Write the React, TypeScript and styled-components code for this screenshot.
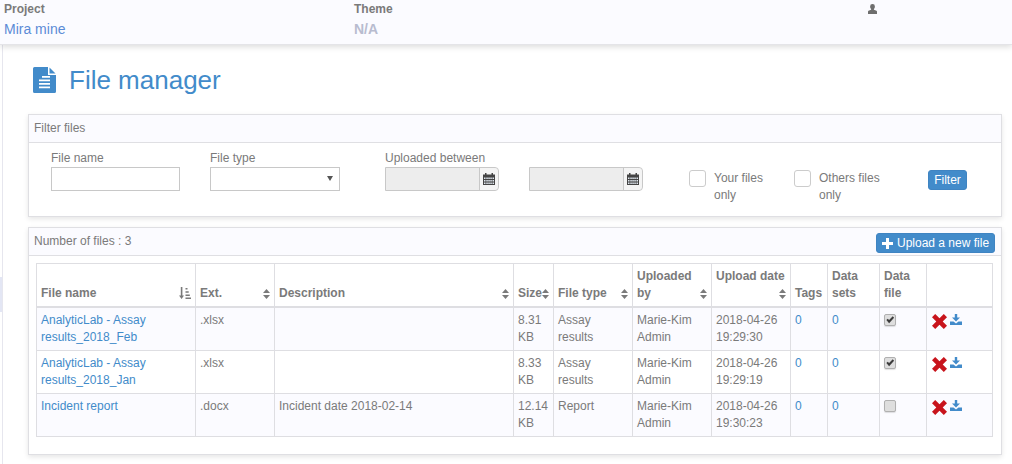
import React from "react";
import styled, { createGlobalStyle } from "styled-components";

const Global = createGlobalStyle`
  html, body { margin: 0; padding: 0; background: #fff; }
  body { font-family: "Liberation Sans", Arial, sans-serif; font-size: 12px; line-height: 17px; color: #7a7a7a; }
  * { box-sizing: border-box; }
`;

const Page = styled.div`
  width: 1012px;
  height: 464px;
  overflow: hidden;
  display: flex;
  flex-direction: column;
`;

const TopBar = styled.header`
  height: 45px;
  flex: none;
  background: #fbfbff;
  border-bottom: 1px solid #e4e4e8;
  box-shadow: 0 2px 6px rgba(0, 0, 0, 0.14);
  display: grid;
  grid-template-columns: 350px 514px 1fr;
  padding: 2px 0 0 4px;
  position: relative;
  z-index: 2;
`;

const TopLabel = styled.div`
  font-weight: bold;
  font-size: 12px;
  line-height: 15px;
  color: #7a7a7a;
`;

const TopValue = styled.div<{ $muted?: boolean }>`
  font-size: 14px;
  line-height: 20px;
  margin-top: 2px;
  color: ${(p) => (p.$muted ? "#b8bccf" : "#5b8bd6")};
  font-weight: ${(p) => (p.$muted ? "bold" : "normal")};
`;

const UserSlot = styled.div`
  padding-top: 2px;
`;

const Content = styled.div`
  flex: 1;
  display: flex;
  min-height: 0;
`;

const Rail = styled.aside`
  width: 2px;
  flex: none;
  padding-top: 232px;
`;

const RailMark = styled.div`
  height: 35px;
  background: #e3e6f4;
`;

const Body = styled.main`
  flex: 1;
  border-left: 1px solid #e6e6ee;
  padding: 0 10px 0 25px;
`;

const Title = styled.h1`
  margin: 20px 0 0 5px;
  height: 30px;
  display: flex;
  align-items: center;
  gap: 13px;
  font-size: 26px;
  font-weight: normal;
  line-height: 30px;
  color: #428bca;
`;

const Panel = styled.section`
  border: 1px solid #dfdfe3;
  background: #fff;
  box-shadow: 0 2px 5px rgba(0, 0, 0, 0.1);
`;

const FilterPanel = styled(Panel)`
  margin-top: 19px;
  height: 103px;
`;

const FilesPanel = styled(Panel)`
  margin-top: 10px;
  height: 228px;
`;

const PanelHead = styled.div`
  height: 28px;
  background: #fbfbff;
  border-bottom: 1px solid #dfdfe3;
  padding: 5px 6px 0 5px;
  display: flex;
  justify-content: space-between;
  align-items: flex-start;
`;

const FilterRow = styled.div`
  display: flex;
  align-items: flex-start;
  padding: 7px 0 0 22px;
`;

const Field = styled.label<{ $w: number }>`
  display: block;
  width: ${(p) => p.$w}px;
  flex: none;
`;

const FieldLabel = styled.div`
  height: 17px;
  line-height: 17px;
`;

const TextBox = styled.div<{ $w: number }>`
  width: ${(p) => p.$w}px;
  height: 24px;
  border: 1px solid #c8c8c8;
  background: #fff;
  position: relative;
`;

const Caret = styled.span`
  position: absolute;
  right: 6px;
  top: 8px;
  border-left: 3px solid transparent;
  border-right: 3px solid transparent;
  border-top: 5px solid #555;
`;

const DateGroup = styled.div`
  display: flex;
  width: 114px;
  height: 24px;
  border: 1px solid #c8c8c8;
  border-radius: 0 4px 4px 0;
  background: #ededed;
`;

const DateInput = styled.div`
  flex: 1;
`;

const DateAddon = styled.div`
  width: 19px;
  border-left: 1px solid #c8c8c8;
  display: flex;
  align-items: center;
  justify-content: center;
  background: #f4f4f4;
  border-radius: 0 4px 4px 0;
`;

const CheckWrap = styled.div<{ $w: number }>`
  width: ${(p) => p.$w}px;
  flex: none;
  display: flex;
  gap: 8px;
  padding-top: 20px;
`;

const CheckBox = styled.span`
  width: 17px;
  height: 17px;
  flex: none;
  border: 1px solid #ccc;
  border-radius: 3px;
  background: #fff;
`;

const CheckText = styled.span`
  width: 72px;
  display: block;
`;

const Btn = styled.button`
  border: 1px solid #3f84c2;
  background: #428bca;
  color: #fff;
  font: normal 12px/17px "Liberation Sans", Arial, sans-serif;
  border-radius: 3px;
  padding: 0 5px;
  height: 20px;
  display: inline-flex;
  align-items: center;
  gap: 4px;
  white-space: nowrap;
`;

const FilterBtn = styled(Btn)`
  margin-top: 20px;
  width: 39px;
  justify-content: center;
`;

const UploadBtn = styled(Btn)`
  width: 119px;
`;

const TableWrap = styled.div`
  padding: 7px 7px 0;
`;

const Table = styled.table`
  border-collapse: collapse;
  table-layout: fixed;
  width: 956px;
`;

const Th = styled.th`
  border: 1px solid #dedee2;
  border-bottom: 2px solid #dedee2;
  padding: 4px;
  height: 42px;
  vertical-align: bottom;
  text-align: left;
  font-weight: bold;
  color: #7a7a7a;
  position: relative;
`;

const Td = styled.td`
  border: 1px solid #dedee2;
  padding: 4px;
  height: 43px;
  vertical-align: top;
  color: #7a7a7a;
`;

const Tr = styled.tr<{ $odd?: boolean }>`
  background: ${(p) => (p.$odd ? "#fbfbff" : "#fff")};
`;

const Link = styled.a`
  color: #428bca;
  text-decoration: none;
`;

const SortSlot = styled.span`
  position: absolute;
  right: 4px;
  bottom: 7px;
  display: flex;
`;

const TickBox = styled.span`
  display: block;
  width: 12px;
  height: 12px;
  margin: 2px 0 0 0;
  background: #dedede;
  border: 1px solid #b0b0b0;
  border-radius: 2px;
  box-shadow: 0 1px 1px rgba(0, 0, 0, 0.12);
  position: relative;
`;

const Actions = styled.div`
  display: flex;
  align-items: flex-start;
  gap: 3px;
  padding: 2px 0 0 1px;
`;

const DocIcon = () => (
  <svg width="23" height="26" viewBox="0 0 23 26" aria-hidden="true">
    <path fill="#428bca" d="M1.500 0H15v8h8v16.500a1.500 1.500 0 0 1-1.500 1.500h-20A1.500 1.500 0 0 1 0 24.500v-23A1.500 1.500 0 0 1 1.500 0Z" />
    <path fill="#428bca" d="M16.500 0.500 22.500 6.500H16.500Z" />
    <path fill="#fff" d="M9 9h8v1.800H9ZM6 12.500h11v1.800H6ZM6 16h11v1.800H6ZM6 19.500h11v1.800H6Z" />
  </svg>
);

const UserIcon = () => (
  <svg width="9" height="10" viewBox="0 0 9 10" aria-hidden="true" style={{ display: "block" }}>
    <path fill="#6e6e6e" d="M4.500 0A2.400 2.400 0 0 1 6.900 2.400c0 1.100-.4 2-1 2.500v.8l2.600 1.100c.4.200.5.500.5.900V10H0V7.700c0-.4.100-.7.500-.9l2.600-1.100v-.8c-.6-.5-1-1.400-1-2.500A2.400 2.400 0 0 1 4.500 0Z" />
  </svg>
);

const CalIcon = () => (
  <svg width="12" height="12" viewBox="0 0 12 12" aria-hidden="true">
    <path fill="#444" d="M0 1.500h2V0h1.500v1.500h5V0H10v1.500h2V12H0Z" />
    <path fill="#dfe6ee" d="M1 4.500h1.500V6H1ZM3.300 4.500h1.500V6H3.300ZM5.300 4.500h1.500V6H5.300ZM7.300 4.500h1.500V6H7.300ZM9.500 4.500H11V6H9.500ZM1 7h1.500v1.500H1ZM3.300 7h1.500v1.500H3.300ZM5.300 7h1.500v1.500H5.300ZM7.300 7h1.500v1.500H7.300ZM9.500 7H11v1.500H9.500ZM1 9.500h1.500V11H1ZM3.300 9.500h1.500V11H3.300ZM5.300 9.500h1.500V11H5.300ZM7.300 9.500h1.500V11H7.300ZM9.500 9.500H11V11H9.500Z" />
  </svg>
);

const SortIcon = () => (
  <svg width="7" height="10" viewBox="0 0 7 10" aria-hidden="true" style={{ display: "block" }}>
    <path fill="#7a7a7a" d="M3.500 0 7 4H0ZM0 6h7L3.500 10Z" />
  </svg>
);

const SortAmountIcon = () => (
  <svg width="12" height="12" viewBox="0 0 12 12" aria-hidden="true" style={{ display: "block" }}>
    <path fill="#7a7a7a" d="M1.800 0h1.600v8.500H5L2.600 12 0 8.500h1.800ZM6.500 1h2v1.500h-2ZM6.500 4.300h3.200v1.500H6.500ZM6.500 7.400h4.300v1.500H6.500ZM6.500 10.500H12V12H6.500Z" />
  </svg>
);

const PlusIcon = () => (
  <svg width="11" height="11" viewBox="0 0 11 11" aria-hidden="true" style={{ flex: "none" }}>
    <path fill="#fff" d="M4 0h3v4h4v3H7v4H4V7H0V4h4Z" />
  </svg>
);

const RemoveIcon = () => (
  <svg width="15" height="15" viewBox="0 0 15 15" aria-hidden="true" style={{ display: "block" }}>
    <path fill="#c8141c" d="M3.200 0 7.500 4.200 11.800 0 15 3.200 10.700 7.500 15 11.800 11.800 15 7.500 10.800 3.200 15 0 11.800 4.300 7.500 0 3.200Z" />
  </svg>
);

const SaveIcon = () => (
  <svg width="12" height="11" viewBox="0 0 12 11" aria-hidden="true" style={{ display: "block" }}>
    <path fill="#428bca" d="M4.800 0h2.400v3.500H10L6 7.500 2 3.500h2.800Z" />
    <path fill="#428bca" d="M0 7.500h3.500L6 9.500l2.500-2H12V11H0Z" />
  </svg>
);

const Tick = () => (
  <svg width="10" height="10" viewBox="0 0 11 11" aria-hidden="true" style={{ position: "absolute", left: 0, top: 0 }}>
    <path fill="#3c3c3c" d="M1.500 5.500 3 4l1.500 1.500L8.500 1.500 10 3 4.500 9Z" />
  </svg>
);

const cols = [159, 79, 239, 40, 79, 79, 79, 37, 52, 47, 66];

const rows = [
  { name: "AnalyticLab - Assay results_2018_Feb", ext: ".xlsx", desc: "", size: "8.31 KB", type: "Assay results", date: "2018-04-26 19:29:30", on: true },
  { name: "AnalyticLab - Assay results_2018_Jan", ext: ".xlsx", desc: "", size: "8.33 KB", type: "Assay results", date: "2018-04-26 19:29:19", on: true },
  { name: "Incident report", ext: ".docx", desc: "Incident date 2018-02-14", size: "12.14 KB", type: "Report", date: "2018-04-26 19:30:23", on: false },
];

const sortable = ["Ext.", "Description", "Size", "File type", "Uploaded by"];

export default function App() {
  return (
    <Page>
      <Global />
      <TopBar>
        <div>
          <TopLabel>Project</TopLabel>
          <TopValue>Mira mine</TopValue>
        </div>
        <div>
          <TopLabel>Theme</TopLabel>
          <TopValue $muted>N/A</TopValue>
        </div>
        <UserSlot>
          <UserIcon />
        </UserSlot>
      </TopBar>
      <Content>
        <Rail>
          <RailMark />
        </Rail>
        <Body>
          <Title>
            <DocIcon />
            File manager
          </Title>
          <FilterPanel>
            <PanelHead>Filter files</PanelHead>
            <FilterRow>
              <Field $w={159}>
                <FieldLabel>File name</FieldLabel>
                <TextBox $w={129} />
              </Field>
              <Field $w={175}>
                <FieldLabel>File type</FieldLabel>
                <TextBox $w={130}>
                  <Caret />
                </TextBox>
              </Field>
              <Field $w={144}>
                <FieldLabel>Uploaded between</FieldLabel>
                <DateGroup>
                  <DateInput />
                  <DateAddon>
                    <CalIcon />
                  </DateAddon>
                </DateGroup>
              </Field>
              <Field $w={160}>
                <FieldLabel>&nbsp;</FieldLabel>
                <DateGroup>
                  <DateInput />
                  <DateAddon>
                    <CalIcon />
                  </DateAddon>
                </DateGroup>
              </Field>
              <CheckWrap $w={105}>
                <CheckBox />
                <CheckText>Your files only</CheckText>
              </CheckWrap>
              <CheckWrap $w={134}>
                <CheckBox />
                <CheckText>Others files only</CheckText>
              </CheckWrap>
              <FilterBtn>Filter</FilterBtn>
            </FilterRow>
          </FilterPanel>
          <FilesPanel>
            <PanelHead>
              Number of files : 3
              <UploadBtn>
                <PlusIcon />
                Upload a new file
              </UploadBtn>
            </PanelHead>
            <TableWrap>
              <Table>
                <colgroup>
                  {cols.map((w, i) => (
                    <col key={i} style={{ width: w }} />
                  ))}
                </colgroup>
                <thead>
                  <tr>
                    <Th>
                      File name
                      <SortSlot>
                        <SortAmountIcon />
                      </SortSlot>
                    </Th>
                    {sortable.map((h) => (
                      <Th key={h}>
                        {h}
                        <SortSlot>
                          <SortIcon />
                        </SortSlot>
                      </Th>
                    ))}
                    <Th>
                      Upload date
                      <br />
                      &nbsp;
                      <SortSlot>
                        <SortIcon />
                      </SortSlot>
                    </Th>
                    <Th>Tags</Th>
                    <Th>Data sets</Th>
                    <Th>Data file</Th>
                    <Th />
                  </tr>
                </thead>
                <tbody>
                  {rows.map((r, i) => (
                    <Tr key={r.name} $odd={i % 2 === 0}>
                      <Td>
                        <Link>{r.name}</Link>
                      </Td>
                      <Td>{r.ext}</Td>
                      <Td>{r.desc}</Td>
                      <Td>{r.size}</Td>
                      <Td>{r.type}</Td>
                      <Td>Marie-Kim Admin</Td>
                      <Td>{r.date}</Td>
                      <Td>
                        <Link>0</Link>
                      </Td>
                      <Td>
                        <Link>0</Link>
                      </Td>
                      <Td>
                        <TickBox>{r.on && <Tick />}</TickBox>
                      </Td>
                      <Td>
                        <Actions>
                          <RemoveIcon />
                          <SaveIcon />
                        </Actions>
                      </Td>
                    </Tr>
                  ))}
                </tbody>
              </Table>
            </TableWrap>
          </FilesPanel>
        </Body>
      </Content>
    </Page>
  );
}
